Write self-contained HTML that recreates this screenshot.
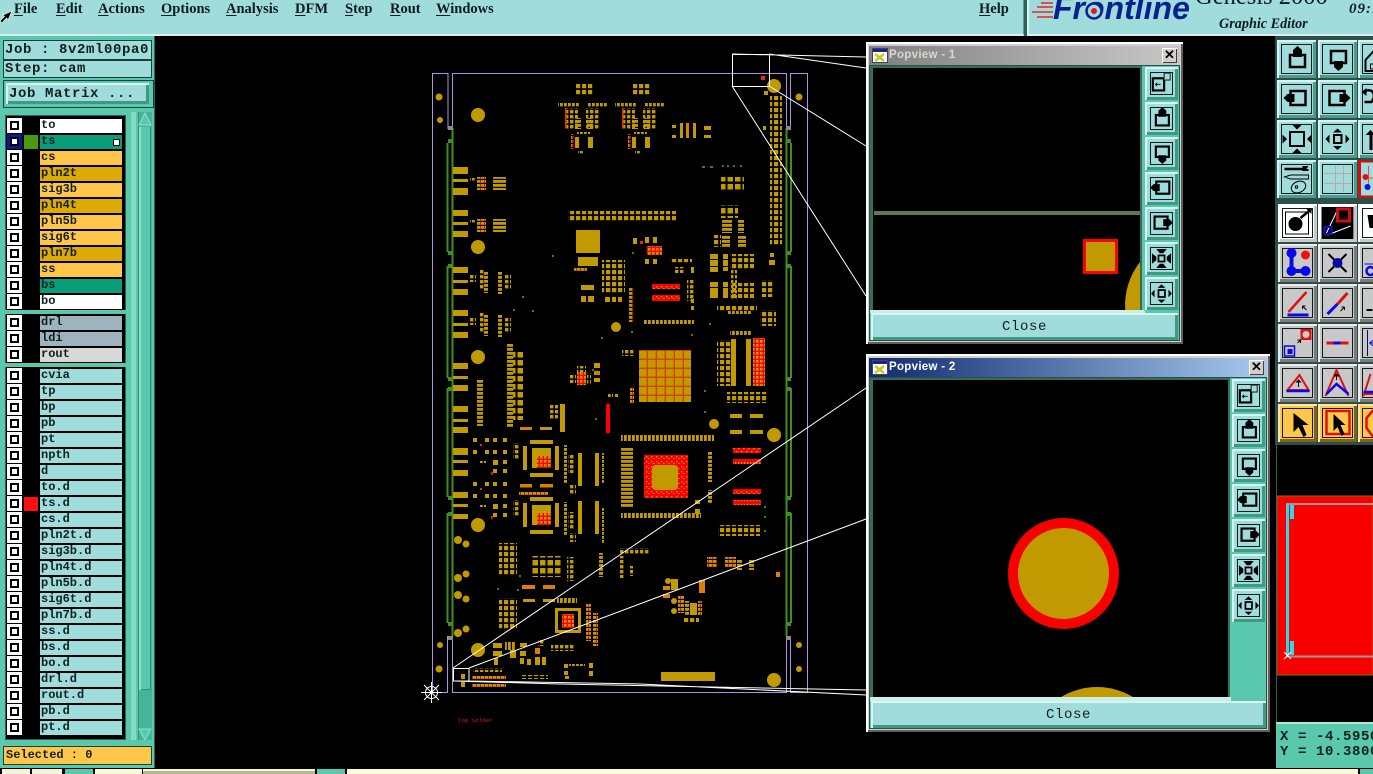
<!DOCTYPE html>
<html><head><meta charset="utf-8"><title>Genesis 2000 Graphic Editor</title>
<style>
html,body{margin:0;padding:0;width:1373px;height:774px;overflow:hidden;background:#000}
body{position:relative;font-family:"Liberation Mono",monospace;font-weight:bold;color:#10201c}
.a,.b,.r,.c,.s,.n,.w,.sb{position:absolute}
.a{display:block}
.m{position:absolute;top:0;font:bold 14.5px/18px "Liberation Serif",serif;color:#0c1c20}
.m u{text-underline-offset:2px}
.t14{font-size:14px;letter-spacing:.6px;line-height:17px;white-space:pre}
.b{width:39px;height:38px;overflow:hidden}
.b:before{content:"";position:absolute;left:4px;top:4px;right:4px;bottom:4px;border:1px solid #08201c}
.b svg{position:absolute;left:0;top:0;width:39px;height:38px}
.tl{background:#a0dcdc;box-shadow:inset 2px 2px 0 #d8f4f4,inset -3px -3px 0 #4f9a8e}
.wh{background:#fff;box-shadow:inset 2px 2px 0 #fff,inset -3px -3px 0 #c8c8c8}
.gr{background:#c8c8c8;box-shadow:inset 2px 2px 0 #ececec,inset -3px -3px 0 #7c7c7c}
.or{background:#ffc64a;box-shadow:inset 2px 2px 0 #ffe6a8,inset -3px -3px 0 #806020}
.sb{width:33px;height:33px;background:#a0dcdc;box-shadow:inset 2px 2px 0 #d8f4f4,inset -3px -3px 0 #3f9a84;outline:1px solid #5ac8ac}
.sb:before{content:"";position:absolute;left:5px;top:5px;right:5px;bottom:5px;border:1px solid #08201c}
.sb svg{position:absolute;left:0;top:0;width:33px;height:33px}
.c{left:7px;width:5px;height:5px;border:2px solid #000;outline:3px solid #fff;background:#fff;margin:2px 0 0 3px}
.n{left:40px;height:14px;font-size:12px;line-height:13px;padding-left:1px;box-sizing:border-box;width:82px;background:#9fdcdc;white-space:pre}
.clb{position:absolute;height:27px;background:#a0dcdc;box-shadow:inset 2px 2px 0 #d8f4f4,inset -3px -3px 0 #3f9a84;text-align:center;line-height:29px;font-size:14px;letter-spacing:.6px;font-weight:normal}
.tt{position:absolute;font:bold 11.5px/16px "Liberation Sans",sans-serif;letter-spacing:.3px}
.x{position:absolute;width:15px;height:15px;background:#d4d0c8;box-shadow:inset 1px 1px 0 #fff,inset -1px -1px 0 #404040;font:bold 13px/14px "Liberation Sans",sans-serif;text-align:center;color:#000}
</style></head><body>

<svg class="a" style="left:0;top:0" width="1373" height="774" viewBox="0 0 1373 774">
<defs>
<pattern id="p6" width="6" height="6" patternUnits="userSpaceOnUse"><rect width="4.200" height="4.200" fill="#c09a00"/></pattern>
<pattern id="p7" width="7.5" height="8" patternUnits="userSpaceOnUse"><rect width="5.500" height="5.500" fill="#c09a00"/></pattern>
<pattern id="p4" width="5" height="5" patternUnits="userSpaceOnUse"><rect width="3.400" height="3.400" fill="#c09a00"/></pattern>
<pattern id="h3" width="4" height="4" patternUnits="userSpaceOnUse"><rect width="4" height="2.800" fill="#c09a00"/></pattern>
<pattern id="v3" width="4" height="4" patternUnits="userSpaceOnUse"><rect width="2.800" height="4" fill="#c09a00"/></pattern>
<pattern id="hr" width="4" height="4" patternUnits="userSpaceOnUse"><rect width="4" height="2.800" fill="#c09a00"/><rect width="1" height="2.800" fill="#f00"/></pattern>
<pattern id="bg" width="9" height="9" patternUnits="userSpaceOnUse"><rect width="9" height="9" fill="#d84000"/><rect width="7.600" height="7.600" fill="#c09a00"/></pattern>
<pattern id="sg" width="4" height="4" patternUnits="userSpaceOnUse"><rect width="4" height="4" fill="#f00"/><rect width="2.600" height="2.600" fill="#c09a00"/></pattern>
<pattern id="rs" width="5" height="5" patternUnits="userSpaceOnUse"><rect width="5" height="5" fill="#f00"/><rect x="1" y="1" width="1.400" height="1.400" fill="#c09a00"/><rect x="3" y="3" width="1.600" height="1" fill="#c09a00"/></pattern>
<pattern id="rc" width="3" height="6" patternUnits="userSpaceOnUse"><rect width="3" height="6" fill="#f00"/><rect width="1.300" height="3" fill="#c09a00"/></pattern>

<g id="ab" fill="#c09a00">
<rect x="576" y="84" width="18" height="11" fill="url(#p6)"/>
<rect x="558" y="103" width="21" height="3.400" fill="url(#v3)"/>
<rect x="587" y="103" width="21" height="3.400" fill="url(#v3)"/>
<rect x="565" y="108" width="13" height="21" fill="url(#p4)"/>
<rect x="586" y="108" width="14" height="21" fill="url(#p4)"/>
<rect x="575" y="118" width="6" height="11" fill="url(#h3)"/>
<rect x="587" y="118" width="6" height="11" fill="url(#h3)"/>
<rect x="565" y="108" width="1.500" height="20" fill="#e03000"/>
<rect x="577" y="132" width="13" height="2" fill="url(#v3)"/>
<rect x="575" y="137" width="4" height="11"/><rect x="588" y="137" width="5" height="11"/>
<rect x="571" y="134" width="2.400" height="15" fill="url(#hr)"/>
<rect x="578" y="151" width="5" height="2.400" fill="url(#v3)"/>
</g>
<g id="d1" fill="#c09a00">
<rect x="470" y="178" width="5" height="2.500" fill="url(#v3)"/>
<rect x="477" y="177" width="9" height="13" fill="url(#hr)"/>
<rect x="493" y="177" width="13" height="13" fill="url(#h3)"/>
</g>
<g id="e1" fill="#c09a00">
<rect x="469" y="274" width="7" height="8" fill="url(#p4)"/>
<rect x="479" y="270" width="5" height="20" fill="url(#p4)"/>
<rect x="484" y="271" width="4" height="22" fill="url(#h3)"/>
<rect x="498" y="271" width="4" height="23" fill="url(#h3)"/>
<rect x="504" y="275" width="7" height="14" fill="url(#p4)"/>
</g>
<g id="ch" fill="#c09a00">
<rect x="523" y="446" width="4" height="24"/><rect x="555" y="446" width="4" height="24"/>
<rect x="530" y="440" width="23" height="4"/><rect x="530" y="473" width="23" height="4"/>
<rect x="532" y="448" width="19" height="20"/>
<rect x="537" y="456" width="14" height="12" fill="url(#sg)"/>
<rect x="513" y="443" width="6" height="17" fill="url(#p4)"/>
</g>
<g id="cl" fill="#c09a00">
<rect x="473" y="438" width="4" height="4"/><rect x="485" y="438" width="4" height="4"/><rect x="493" y="438" width="4" height="4"/><rect x="503" y="438" width="4" height="4"/>
<rect x="473" y="450" width="4" height="4"/><rect x="485" y="450" width="4" height="4"/><rect x="493" y="450" width="4" height="4"/><rect x="503" y="450" width="4" height="4"/>
<rect x="493" y="460" width="5" height="5"/><rect x="503" y="460" width="4" height="4"/><rect x="493" y="469" width="4" height="4"/><rect x="503" y="469" width="4" height="4"/>
<rect x="479" y="461" width="7" height="2" fill="url(#v3)"/>
<rect x="480" y="444" width="2" height="2" fill="#e03000"/><rect x="491" y="472" width="2" height="3" fill="#f00"/>
</g>
</defs>

<!-- board outline -->
<g fill="none" stroke="#b090e0" stroke-width="1">
<path d="M448 129V73.500H432.500V692.500H447.500V636"/>
<path d="M452.500 128V73.500H786.500V128M790.500 128V73.500H807.500V692.500H790.500V636M786.500 636V692.500H452.500V636"/>
</g>
<!-- green edges -->
<g fill="none" stroke="#3f9020" stroke-width="2">
<path d="M452.500 128V636M786.500 128V636"/>
<path d="M447.500 143V252M447.500 266V378M447.500 388V497M447.500 513V623M791 143V252M791 266V378M791 388V497M791 513V623"/>
</g>
<g fill="#3f9020">
<rect x="448" y="139" width="5" height="4"/><rect x="448" y="251" width="5" height="4"/><rect x="448" y="264" width="5" height="4"/><rect x="448" y="377" width="5" height="4"/><rect x="448" y="387" width="5" height="4"/><rect x="448" y="496" width="5" height="4"/><rect x="448" y="512" width="5" height="4"/><rect x="448" y="622" width="5" height="4"/>
<rect x="786" y="139" width="5" height="4"/><rect x="786" y="251" width="5" height="4"/><rect x="786" y="264" width="5" height="4"/><rect x="786" y="377" width="5" height="4"/><rect x="786" y="387" width="5" height="4"/><rect x="786" y="496" width="5" height="4"/><rect x="786" y="512" width="5" height="4"/><rect x="786" y="622" width="5" height="4"/>
</g>
<g fill="#8a8a8a"><rect x="448" y="126" width="5" height="4"/><rect x="786" y="126" width="5" height="4"/><rect x="448" y="636" width="5" height="4"/><rect x="786" y="636" width="5" height="4"/></g>

<!-- PCB copper -->
<g fill="#c09a00">
<circle cx="478" cy="115" r="7"/><circle cx="478" cy="247" r="7"/><circle cx="478" cy="357" r="7"/><circle cx="478" cy="525" r="7"/><circle cx="478" cy="650" r="7"/>
<circle cx="774" cy="86" r="7"/><circle cx="774" cy="435" r="7"/><circle cx="774" cy="680" r="7"/>
<circle cx="439" cy="97" r="3.500"/><circle cx="440" cy="120" r="3"/><circle cx="799" cy="97" r="3.500"/>
<circle cx="440" cy="645" r="3"/><circle cx="439" cy="669" r="3.500"/><circle cx="799" cy="645" r="3"/><circle cx="799" cy="669" r="3"/>
<circle cx="458" cy="540" r="4"/><circle cx="466" cy="544" r="3.500"/><circle cx="458" cy="578" r="4"/><circle cx="466" cy="574" r="3.500"/><circle cx="458" cy="595" r="4"/><circle cx="466" cy="599" r="3.500"/><circle cx="458" cy="633" r="4"/><circle cx="466" cy="629" r="3.500"/>
<circle cx="616" cy="327" r="5"/><circle cx="714" cy="424" r="5"/><circle cx="668" cy="581" r="3"/>
<circle cx="674" cy="601" r="3"/><circle cx="674" cy="611" r="3"/>
<rect x="453" y="167" width="15" height="7"/><rect x="453" y="179" width="15" height="3"/><rect x="453" y="188" width="15" height="7"/>
<rect x="453" y="210" width="15" height="6"/><rect x="453" y="222" width="15" height="3"/><rect x="453" y="231" width="15" height="6"/>
<rect x="453" y="267" width="15" height="6"/><rect x="453" y="280" width="15" height="3"/><rect x="453" y="289" width="15" height="6"/>
<rect x="453" y="310" width="15" height="6"/><rect x="453" y="323" width="15" height="3"/><rect x="453" y="332" width="15" height="6"/>
<rect x="453" y="363" width="15" height="6"/><rect x="453" y="376" width="15" height="3"/><rect x="453" y="385" width="15" height="6"/>
<rect x="453" y="406" width="15" height="6"/><rect x="453" y="419" width="15" height="3"/><rect x="453" y="427" width="15" height="6"/>
<rect x="453" y="448" width="15" height="7"/><rect x="453" y="460" width="15" height="3"/><rect x="453" y="470" width="15" height="6"/>
<rect x="453" y="492" width="15" height="6"/><rect x="453" y="504" width="15" height="3"/><rect x="453" y="514" width="15" height="5"/>
<rect x="770" y="96" width="12" height="150" fill="url(#p6)"/>
<rect x="763" y="126" width="3" height="4"/><rect x="770" y="253" width="4" height="4"/><rect x="769" y="260" width="6" height="5"/>
<rect x="761" y="76" width="4" height="4" fill="#e03000"/><rect x="764" y="91" width="4" height="4"/>
<rect x="672" y="125" width="4" height="3"/><rect x="672" y="135" width="4" height="3"/><rect x="704" y="126" width="7" height="4"/><rect x="704" y="135" width="7" height="3"/>
<rect x="680" y="123" width="3" height="15"/><rect x="686" y="123" width="3" height="15" fill="#d88000"/><rect x="693" y="123" width="3" height="15"/>
<rect x="568" y="211" width="108" height="11" fill="url(#p6)"/>
<rect x="576" y="230" width="24" height="23"/><rect x="578" y="257" width="20" height="9"/>
<rect x="574" y="268" width="13" height="3" fill="url(#hr)"/>
<rect x="645" y="237" width="4" height="6"/><rect x="653" y="237" width="4" height="6"/><rect x="645" y="259" width="4" height="5"/><rect x="653" y="259" width="4" height="5"/>
<rect x="647" y="246" width="15" height="9" fill="url(#sg)"/><rect x="633" y="238" width="4" height="6"/><rect x="640" y="241" width="3" height="3" fill="#e03000"/>
<rect x="602" y="260" width="23" height="33" fill="url(#p6)"/>
<rect x="605" y="287" width="17" height="5" fill="url(#p6)"/>
<rect x="581" y="285" width="13" height="5"/><rect x="581" y="296" width="5" height="6"/><rect x="588" y="296" width="6" height="6"/><rect x="605" y="297" width="5" height="5"/><rect x="612" y="297" width="4" height="5"/><rect x="618" y="297" width="4" height="5" fill="#d88000"/>
<rect x="629" y="288" width="4" height="34" fill="url(#hr)"/>
<rect x="652" y="284" width="28" height="5" fill="url(#rs)"/><rect x="652" y="295" width="28" height="6" fill="url(#rs)"/>
<rect x="643" y="320" width="51" height="4" fill="url(#v3)"/>
<rect x="670" y="259" width="22" height="4" fill="url(#p6)"/><rect x="674" y="267" width="11" height="6" fill="url(#p4)"/><rect x="691" y="267" width="3" height="6"/>
<rect x="687" y="279" width="7" height="22" fill="url(#p4)"/><rect x="691" y="299" width="3" height="4"/><rect x="691" y="306" width="3" height="4"/>
<rect x="721" y="177" width="23" height="13" fill="url(#p7)"/><rect x="721" y="205" width="17" height="13" fill="url(#p7)"/>
<rect x="722" y="220" width="10" height="13" fill="url(#h3)"/><rect x="738" y="220" width="6" height="13" fill="url(#h3)"/>
<rect x="713" y="235" width="8" height="12" fill="url(#p6)"/><rect x="722" y="236" width="8" height="12" fill="url(#h3)"/><rect x="738" y="236" width="8" height="12" fill="url(#h3)"/>
<rect x="710" y="254" width="8" height="5"/><rect x="710" y="260" width="8" height="6"/><rect x="710" y="267" width="8" height="5"/><rect x="723" y="254" width="5" height="5"/><rect x="723" y="260" width="5" height="6"/><rect x="723" y="267" width="5" height="4"/>
<rect x="710" y="282" width="8" height="5"/><rect x="710" y="288" width="8" height="5"/><rect x="710" y="293" width="8" height="5"/><rect x="723" y="282" width="5" height="5"/><rect x="723" y="288" width="5" height="5"/><rect x="723" y="293" width="5" height="5"/>
<rect x="730" y="254" width="24" height="15" fill="url(#p6)"/><rect x="730" y="283" width="24" height="15" fill="url(#p6)"/><rect x="731" y="269" width="6" height="30" fill="url(#p4)"/>
<rect x="762" y="280" width="11" height="17" fill="url(#p6)"/>
<rect x="717" y="306" width="40" height="5" fill="url(#p6)"/><rect x="728" y="311" width="24" height="3" fill="url(#v3)"/>
<rect x="760" y="310" width="16" height="16" fill="url(#p6)"/>
<rect x="730" y="331" width="22" height="4" fill="url(#v3)"/>
<rect x="731" y="339" width="5" height="29"/><rect x="746" y="339" width="5" height="29"/>
<rect x="731" y="365" width="5" height="21"/><rect x="746" y="365" width="5" height="21"/>
<rect x="717" y="340" width="14" height="46" fill="url(#p6)"/>
<rect x="753" y="338" width="12" height="48" fill="url(#sg)"/>
<rect x="727" y="392" width="40" height="11" fill="url(#p6)"/>
<rect x="570" y="375" width="6" height="8" fill="url(#p4)"/><rect x="594" y="363" width="6" height="5"/><rect x="594" y="371" width="6" height="4" fill="#d88000"/><rect x="594" y="378" width="6" height="4"/><rect x="577" y="366" width="9" height="6" fill="url(#p4)"/><rect x="577" y="372" width="9" height="13" fill="url(#sg)"/><rect x="587" y="373" width="4" height="12" fill="url(#p4)"/>
<rect x="622" y="350" width="13" height="6" fill="url(#p4)"/>
<rect x="639" y="350" width="52" height="52" fill="url(#bg)"/>
<rect x="507" y="343" width="6" height="84" fill="url(#h3)"/><rect x="513" y="352" width="10" height="68" fill="url(#p7)"/>
<rect x="477" y="380" width="6" height="46" fill="url(#h3)"/>
<rect x="520" y="427" width="12" height="3" fill="#d88000"/><rect x="540" y="427" width="12" height="3"/>
<rect x="549" y="405" width="9" height="15" fill="url(#p4)"/><rect x="560" y="404" width="5" height="28"/>
<rect x="606" y="404" width="4" height="29" fill="#f00"/><rect x="630" y="388" width="4" height="15" fill="url(#hr)"/><rect x="607" y="394" width="6" height="3" fill="url(#v3)"/><rect x="615" y="394" width="3" height="3"/>
<rect x="621" y="435" width="93" height="6" fill="url(#v3)"/>
<rect x="621" y="447" width="12" height="60" fill="url(#h3)"/>
<rect x="621" y="513" width="80" height="5" fill="url(#v3)"/>
<rect x="644" y="455" width="44" height="43" fill="url(#rs)"/>
<rect x="652" y="465" width="26" height="25" rx="4"/>
<rect x="708" y="452" width="4" height="30" fill="url(#h3)"/><rect x="708" y="490" width="4" height="13" fill="url(#h3)"/>
<rect x="695" y="500" width="5" height="4"/><rect x="695" y="509" width="5" height="5"/>
<rect x="730" y="414" width="12" height="4"/><rect x="750" y="414" width="13" height="4"/><rect x="730" y="430" width="12" height="4"/><rect x="750" y="430" width="13" height="4"/>
<rect x="733" y="448" width="28" height="5" fill="url(#rs)"/><rect x="733" y="459" width="28" height="5" fill="url(#rc)"/><rect x="733" y="489" width="28" height="5" fill="url(#rs)"/><rect x="733" y="500" width="28" height="5" fill="url(#rc)"/>
<rect x="718" y="525" width="42" height="11" fill="url(#p6)"/>
<use href="#ch"/><use href="#ch" y="57"/><use href="#cl"/><use href="#cl" y="44"/>
<rect x="520" y="484" width="12" height="3.500" fill="#d88000"/><rect x="540" y="484" width="13" height="3.500" fill="#d88000"/><rect x="519" y="492" width="29" height="3" fill="url(#hr)"/>
<rect x="564" y="445" width="3" height="38" fill="url(#h3)"/><rect x="564" y="502" width="3" height="33" fill="url(#h3)"/>
<rect x="568" y="455" width="6" height="18" fill="url(#p4)"/><rect x="570" y="484" width="6" height="11" fill="url(#p4)"/><rect x="568" y="512" width="6" height="18" fill="url(#p4)"/><rect x="570" y="533" width="6" height="9" fill="url(#p4)"/>
<rect x="578" y="453" width="4" height="33"/><rect x="595" y="453" width="4" height="33"/><rect x="578" y="501" width="4" height="33"/><rect x="595" y="501" width="4" height="33"/>
<rect x="602" y="453" width="2" height="30" fill="url(#h3)"/><rect x="602" y="508" width="2" height="35" fill="url(#h3)"/>
<rect x="531" y="556" width="31" height="21" fill="url(#p7)"/><rect x="567" y="557" width="7" height="24" fill="url(#p4)"/>
<rect x="499" y="543" width="18" height="32" fill="url(#p6)"/><rect x="499" y="598" width="18" height="31" fill="url(#p6)"/>
<rect x="522" y="585" width="13" height="4" fill="#d88000"/><rect x="543" y="585" width="12" height="4" fill="#d88000"/><rect x="523" y="599" width="12" height="3"/><rect x="543" y="599" width="12" height="3"/>
<rect x="557" y="598" width="20" height="5" fill="url(#v3)"/>
<rect x="555" y="608" width="26" height="25"/><rect x="558" y="611" width="20" height="19" fill="#000"/><rect x="562" y="614" width="12" height="14" fill="url(#sg)"/>
<rect x="586" y="603" width="5" height="38" fill="url(#hr)"/><rect x="593" y="613" width="5" height="33" fill="url(#hr)"/>
<rect x="620" y="548" width="30" height="7" fill="url(#p4)"/><rect x="620" y="556" width="4" height="22" fill="url(#p4)"/><rect x="629" y="566" width="4" height="10" fill="url(#p4)"/>
<rect x="599" y="553" width="4" height="24" fill="url(#h3)"/>
<rect x="707" y="557" width="10" height="10" fill="url(#hr)"/><rect x="725" y="557" width="11" height="10" fill="url(#hr)"/><rect x="737" y="559" width="5" height="11" fill="url(#h3)"/><rect x="749" y="560" width="5" height="10" fill="url(#h3)"/>
<rect x="776" y="572" width="4" height="5" fill="#d88000"/>
<rect x="671" y="579" width="7" height="11"/><rect x="699" y="580" width="6" height="13" fill="#d88000"/><rect x="663" y="586" width="7" height="4" fill="#d88000"/><rect x="663" y="594" width="7" height="4" fill="#d88000"/>
<rect x="678" y="595" width="6" height="18" fill="url(#hr)"/><rect x="690" y="603" width="7" height="12"/><rect x="685" y="601" width="4" height="15" fill="url(#h3)"/><rect x="698" y="601" width="4" height="15" fill="url(#hr)"/><rect x="683" y="618" width="16" height="4" fill="url(#p6)"/>
<rect x="473" y="668" width="29" height="4" fill="url(#p4)"/>
<rect x="472" y="676" width="34" height="4" fill="url(#hr)"/><rect x="472" y="684" width="34" height="4" fill="url(#hr)"/>
<rect x="493" y="643" width="9" height="5"/><rect x="493" y="651" width="9" height="5"/><rect x="494" y="658" width="4" height="7"/><rect x="505" y="642" width="10" height="8" fill="url(#v3)"/><rect x="510" y="650" width="6" height="8"/>
<rect x="520" y="643" width="7" height="4"/><rect x="520" y="651" width="6" height="5"/><rect x="520" y="658" width="4" height="6"/><rect x="527" y="659" width="4" height="6"/><rect x="535" y="657" width="5" height="8"/><rect x="542" y="657" width="4" height="8"/><rect x="535" y="648" width="5" height="6" fill="#d88000"/><rect x="538" y="640" width="6" height="6" fill="url(#p4)"/>
<rect x="551" y="645" width="23" height="6" fill="url(#p4)"/>
<rect x="520" y="675" width="28" height="4" fill="url(#p6)"/>
<rect x="564" y="664" width="4" height="4"/><rect x="564" y="671" width="4" height="4"/><rect x="565" y="676" width="4" height="3"/><rect x="589" y="663" width="4" height="5"/><rect x="589" y="671" width="4" height="5"/><rect x="569" y="664" width="16" height="2" fill="url(#v3)"/>
<rect x="661" y="672" width="54" height="9"/>
<rect x="461" y="674" width="4" height="5"/><rect x="461" y="682" width="4" height="5"/>
</g>
<use href="#ab"/><use href="#ab" x="57"/>
<use href="#d1"/><use href="#d1" y="42"/><use href="#e1"/><use href="#e1" y="43"/>
<g fill="#2f8a1a">
<rect x="702" y="166" width="3" height="2"/><rect x="710" y="166" width="3" height="2"/><rect x="722" y="165" width="2" height="2"/><rect x="727" y="165" width="2" height="2"/><rect x="733" y="165" width="2" height="2"/><rect x="740" y="165" width="2" height="2"/>
<rect x="552" y="255" width="2" height="2"/><rect x="632" y="252" width="2" height="2"/><rect x="522" y="296" width="2" height="2"/><rect x="532" y="310" width="2" height="2"/><rect x="513" y="309" width="2" height="2"/>
<rect x="601" y="337" width="2" height="2"/><rect x="631" y="331" width="2" height="2"/><rect x="691" y="334" width="2" height="2"/><rect x="709" y="323" width="2" height="2"/><rect x="592" y="369" width="2" height="2"/>
<rect x="595" y="418" width="2" height="2"/><rect x="704" y="390" width="2" height="2"/><rect x="704" y="411" width="2" height="2"/><rect x="764" y="506" width="2" height="2"/><rect x="764" y="516" width="2" height="2"/><rect x="764" y="530" width="2" height="2"/>
<rect x="497" y="588" width="2" height="2"/><rect x="517" y="589" width="2" height="2"/><rect x="519" y="575" width="2" height="2"/>
</g>
<g fill="none" stroke="#fff" stroke-width="1">
<path d="M732.500 54.500H769.500V86.500H732.500ZM732 54L866 57M769 54L866 68M769 86L866 146M732 86L866 296"/>
<path d="M453.500 668.500H469V681H453.500ZM453 668L866 388M469 668L866 519M469 681L640 684L866 695M453 681L560 684L866 690"/>
</g>
<g stroke="#fff" stroke-width="1" fill="none"><circle cx="431.500" cy="692.500" r="6"/><path d="M421 692.500H442M431.500 682V703M424 685L439 700M424 700L439 685"/></g>
<text x="458" y="722" fill="#e01818" font-family="Liberation Mono,monospace" font-size="5.800" font-weight="normal">Top Solder</text>
</svg>

<!-- top menu bar -->
<div class="a" style="left:0;top:0;width:1023px;height:34px;background:#a0dcdc;border-bottom:2px solid #d8f0f0;border-right:2px solid #5a9a94"></div>
<div class="a" style="left:1024px;top:0;width:3px;height:36px;background:#2f5f55"></div>
<div class="a" style="left:1027px;top:0;width:346px;height:34px;background:#a0dcdc;border-bottom:2px solid #d8f0f0;box-shadow:inset 2px 0 0 #d8f4f4"></div>
<div class="m" style="left:14px"><u>F</u>ile</div>
<div class="m" style="left:56px"><u>E</u>dit</div>
<div class="m" style="left:98px"><u>A</u>ctions</div>
<div class="m" style="left:161px"><u>O</u>ptions</div>
<div class="m" style="left:226px"><u>A</u>nalysis</div>
<div class="m" style="left:295px"><u>D</u>FM</div>
<div class="m" style="left:345px"><u>S</u>tep</div>
<div class="m" style="left:390px"><u>R</u>out</div>
<div class="m" style="left:436px"><u>W</u>indows</div>
<div class="m" style="left:979px"><u>H</u>elp</div>
<svg class="a" style="left:0;top:8px" width="14" height="18" viewBox="0 0 14 18"><path d="M12 3L3 7l1.500 1.500L0 13l2 2 4.500-5L8 12z" fill="#000" stroke="#fff" stroke-width=".6"/></svg>

<!-- logo -->
<svg class="a" style="left:1030px;top:0" width="24" height="22" viewBox="0 0 24 22"><g stroke="#ee2020" stroke-width="1.600"><path d="M11 3H23M7 7H23M2 12H23M7 17H23"/></g></svg>
<div class="a" style="left:1053px;top:-11px;font:italic bold 32px/38px 'Liberation Sans',sans-serif;color:#0a2090;white-space:nowrap;letter-spacing:0">Frontline</div>
<svg class="a" style="left:1085px;top:2px" width="18" height="18" viewBox="0 0 18 18"><circle cx="9" cy="9" r="7.500" fill="#a0dcdc" stroke="#0a2090" stroke-width="2.500"/><circle cx="9" cy="9" r="3" fill="#e01818"/></svg>
<div class="a" style="left:1195px;top:-17px;font:24.5px/28px 'Liberation Serif',serif;color:#0c1c20;white-space:nowrap">Genesis 2000</div>
<div class="a" style="left:1219px;top:15px;font:italic bold 14.2px/18px 'Liberation Serif',serif;color:#0c1c20;white-space:nowrap">Graphic Editor</div>
<div class="a" style="left:1349px;top:0;font:italic bold 15px/18px 'Liberation Serif',serif;color:#0c1c20;white-space:nowrap;letter-spacing:1px">09:15</div>

<!-- left panel -->
<div class="a" style="left:0;top:36px;width:155px;height:732px;background:#5ac8ac;border-right:1px solid #2f5f55;box-sizing:border-box"></div>
<div class="a t14" style="left:3px;top:40px;width:146px;height:18px;background:#a0dcdc;border:1px solid #16403a;padding-left:1px;line-height:19px">Job : 8v2ml00pa0</div>
<div class="a t14" style="left:3px;top:60px;width:146px;height:16px;background:#a0dcdc;border:1px solid #16403a;padding-left:1px;line-height:17px">Step: cam</div>
<div class="a" style="left:3px;top:80px;width:149px;height:26px;background:#5ac8ac;border:1px solid #16403a"></div>
<div class="a t14" style="left:6px;top:83px;width:143px;height:21px;background:#a0dcdc;box-shadow:inset 2px 2px 0 #d8f4f4,inset -3px -3px 0 #3f9a84;padding-left:3px;box-sizing:border-box;line-height:22px">Job Matrix ...</div>

<div class="a" style="left:5px;top:115px;width:121px;height:625px;background:#000;border:1px solid #2f5f55;box-sizing:border-box;overflow:hidden"></div>
<div class="a" style="left:5px;top:310px;width:121px;height:4px;background:#5ac8ac"></div>
<div class="a" style="left:5px;top:363px;width:121px;height:4px;background:#5ac8ac"></div>
<div class="a" style="left:127px;top:112px;width:9px;height:628px;background:#5ac8ac;box-shadow:inset -5px 0 0 #84dcc6"></div>
<div class="a" style="left:138px;top:112px;width:14px;height:628px;background:#46b496;box-shadow:inset 1px 0 0 #2f8f78"></div>
<div class="a" style="left:139px;top:127px;width:12px;height:563px;background:#5ac8ac;box-shadow:inset 2px 0 0 #8ee0cc,inset -1px -1px 0 #2f8f78"></div>
<svg class="a" style="left:138px;top:112px" width="14" height="15" viewBox="0 0 14 15"><path d="M7 1L13 13H1Z" fill="#5ac8ac" stroke="#8ee0cc"/></svg>
<svg class="a" style="left:138px;top:727px" width="14" height="14" viewBox="0 0 14 14"><path d="M1 2H13L7 13Z" fill="#5ac8ac" stroke="#8ee0cc"/></svg>

<div id="list">
<div class="c" style="top:119px"></div><div class="n" style="top:119px;background:#fff">to</div>
<div class="c" style="top:135px;outline-color:#0a1a90"></div><div class="s" style="left:24px;top:135px;width:14px;height:14px;background:#4a9a10"></div><div class="n" style="top:135px;background:#0a9d7a">ts<span style="position:absolute;right:2px;top:4px;width:5px;height:5px;border:1px solid #000;background:#fff"></span></div>
<div class="c" style="top:151px"></div><div class="n" style="top:151px;background:#ffc64a">cs</div>
<div class="c" style="top:167px"></div><div class="n" style="top:167px;background:#dcaa00">pln2t</div>
<div class="c" style="top:183px"></div><div class="n" style="top:183px;background:#ffc64a">sig3b</div>
<div class="c" style="top:199px"></div><div class="n" style="top:199px;background:#dcaa00">pln4t</div>
<div class="c" style="top:215px"></div><div class="n" style="top:215px;background:#ffc64a">pln5b</div>
<div class="c" style="top:231px"></div><div class="n" style="top:231px;background:#ffc64a">sig6t</div>
<div class="c" style="top:247px"></div><div class="n" style="top:247px;background:#dcaa00">pln7b</div>
<div class="c" style="top:263px"></div><div class="n" style="top:263px;background:#ffc64a">ss</div>
<div class="c" style="top:279px"></div><div class="n" style="top:279px;background:#0a9d7a">bs</div>
<div class="c" style="top:295px"></div><div class="n" style="top:295px;background:#fff">bo</div>
<div class="c" style="top:316px"></div><div class="n" style="top:316px;background:#9db3bd">drl</div>
<div class="c" style="top:332px"></div><div class="n" style="top:332px;background:#9db3bd">ldi</div>
<div class="c" style="top:348px"></div><div class="n" style="top:348px;background:#d8d8d8">rout</div>
<div class="c" style="top:369px"></div><div class="n" style="top:369px">cvia</div>
<div class="c" style="top:385px"></div><div class="n" style="top:385px">tp</div>
<div class="c" style="top:401px"></div><div class="n" style="top:401px">bp</div>
<div class="c" style="top:417px"></div><div class="n" style="top:417px">pb</div>
<div class="c" style="top:433px"></div><div class="n" style="top:433px">pt</div>
<div class="c" style="top:449px"></div><div class="n" style="top:449px">npth</div>
<div class="c" style="top:465px"></div><div class="n" style="top:465px">d</div>
<div class="c" style="top:481px"></div><div class="n" style="top:481px">to.d</div>
<div class="c" style="top:497px"></div><div class="s" style="left:24px;top:497px;width:14px;height:14px;background:#ff1010"></div><div class="n" style="top:497px">ts.d</div>
<div class="c" style="top:513px"></div><div class="n" style="top:513px">cs.d</div>
<div class="c" style="top:529px"></div><div class="n" style="top:529px">pln2t.d</div>
<div class="c" style="top:545px"></div><div class="n" style="top:545px">sig3b.d</div>
<div class="c" style="top:561px"></div><div class="n" style="top:561px">pln4t.d</div>
<div class="c" style="top:577px"></div><div class="n" style="top:577px">pln5b.d</div>
<div class="c" style="top:593px"></div><div class="n" style="top:593px">sig6t.d</div>
<div class="c" style="top:609px"></div><div class="n" style="top:609px">pln7b.d</div>
<div class="c" style="top:625px"></div><div class="n" style="top:625px">ss.d</div>
<div class="c" style="top:641px"></div><div class="n" style="top:641px">bs.d</div>
<div class="c" style="top:657px"></div><div class="n" style="top:657px">bo.d</div>
<div class="c" style="top:673px"></div><div class="n" style="top:673px">drl.d</div>
<div class="c" style="top:689px"></div><div class="n" style="top:689px">rout.d</div>
<div class="c" style="top:705px"></div><div class="n" style="top:705px">pb.d</div>
<div class="c" style="top:721px"></div><div class="n" style="top:721px">pt.d</div>
</div>
<div class="a" style="left:1px;top:740px;width:152px;height:27px;background:#5ac8ac"></div>
<div class="a" style="left:3px;top:746px;width:149px;height:19px;background:#ffc64a;border:1px solid #16403a;box-sizing:border-box;font-size:12px;line-height:17px;padding-left:2px;white-space:pre">Selected : 0</div>

<!-- bottom strip -->
<div class="a" style="left:0;top:768px;width:1373px;height:6px;background:#000"></div>
<div class="a" style="left:2px;top:769px;width:28px;height:5px;background:#f4f4d8"></div>
<div class="a" style="left:32px;top:769px;width:30px;height:5px;background:#f4f4d8"></div>
<div class="a" style="left:65px;top:769px;width:28px;height:5px;background:#5ac8ac"></div>
<div class="a" style="left:95px;top:769px;width:47px;height:5px;background:#fbfbd8"></div>
<div class="a" style="left:143px;top:769px;width:172px;height:5px;background:#b8b890;box-shadow:inset 0 2px 0 #f8f8d8"></div>
<div class="a" style="left:317px;top:769px;width:28px;height:5px;background:#5ac8ac"></div>
<div class="a" style="left:347px;top:769px;width:1011px;height:5px;background:#fbfbd8"></div>
<div class="a" style="left:1360px;top:769px;width:13px;height:5px;background:#5ac8ac"></div>

<!-- icon symbols -->
<svg width="0" height="0" style="position:absolute;left:0;top:0"><defs>
<symbol id="up" viewBox="0 0 38 38"><rect x="12.500" y="15" width="15" height="12" fill="none" stroke="#000" stroke-width="2.500"/><path d="M20 6l4.500 4v7h-9v-7z"/></symbol>
<symbol id="dn" viewBox="0 0 38 38"><rect x="12.500" y="11" width="15" height="12" fill="none" stroke="#000" stroke-width="2.500"/><path d="M20 31l4.500-4v-6h-9v6z"/></symbol>
<symbol id="lf" viewBox="0 0 38 38"><rect x="13" y="11" width="15" height="14" fill="none" stroke="#000" stroke-width="2.500"/><path d="M6 18l4-4h7v8h-7z"/></symbol>
<symbol id="rt" viewBox="0 0 38 38"><rect x="11" y="11" width="15" height="14" fill="none" stroke="#000" stroke-width="2.500"/><path d="M32 18l-4-4h-7v8h7z"/></symbol>
<symbol id="ex" viewBox="0 0 38 38"><rect x="12.500" y="12" width="14" height="14" fill="none" stroke="#000" stroke-width="2"/><path d="M15 5h9l-4.500 4.500zM15 33h9l-4.500-4.500zM5 14.500v9l4.500-4.500zM34 14.500v9l-4.500-4.500z"/></symbol>
<symbol id="fi" viewBox="0 0 38 38"><rect x="15.500" y="15" width="7.500" height="8" fill="none" stroke="#000" stroke-width="2"/><path d="M19 8.500l-4.500 4h9zM19 30l-4.500-4h9zM7 19l4-4.500v9zM31 19l-4-4.500v9z"/></symbol>
<symbol id="ec" viewBox="0 0 38 38"><rect x="15.500" y="15.500" width="7" height="7" fill="none" stroke="#000" stroke-width="2"/><path d="M13 8h12l-4 5h-4zM13 30h12l-4-5h-4zM8 13v12l5-4v-4zM30 13v12l-5-4v-4z"/></symbol>
<symbol id="po" viewBox="0 0 38 38"><rect x="9" y="13" width="13" height="14" fill="none" stroke="#000" stroke-width="2.500"/><rect x="22" y="7" width="7" height="8" fill="#a0dcdc" stroke="#000"/><path d="M18 20H12M14 18l-2 2 2 2" stroke="#000" fill="none"/></symbol>
<symbol id="tl" viewBox="0 0 38 38"><path d="M7 9H26" stroke="#000" stroke-width="2.500"/><path d="M25 6h6l-2 3h2v2h-6z"/><path d="M7 17L13 15H31V19H13z" fill="#a0dcdc" stroke="#000"/><ellipse cx="21" cy="27" rx="7.500" ry="5.500" fill="none" stroke="#000" transform="rotate(-25 21 27)"/><circle cx="19" cy="27" r="1.200" fill="none" stroke="#000"/></symbol>
<symbol id="gd" viewBox="0 0 38 38"><path d="M6 13.500H33M6 23.500H33M17 6V32M25 6V32" stroke="#c0a4a4" fill="none"/></symbol>
<symbol id="cr" viewBox="0 0 38 38"><rect x="1" y="1" width="36" height="36" fill="#a0dcdc" stroke="#d01010" stroke-width="3"/><path d="M6 18H34M10 6V30" stroke="#e05050"/><circle cx="7" cy="17" r="3" fill="#e01010"/><circle cx="9" cy="27" r="3" fill="#1010e0"/></symbol>
<symbol id="bc" viewBox="0 0 38 38"><rect x="7" y="8" width="23" height="22" fill="none" stroke="#000"/><circle cx="17" cy="20" r="7"/><path d="M22 14L33 5" stroke="#000" stroke-width="2.500"/><path d="M27 4h6v6z"/></symbol>
<symbol id="rb" viewBox="0 0 38 38"><rect x="3" y="3" width="32" height="32"/><path d="M7 31L19 6H29M9 31L32 22" stroke="#fff" fill="none"/><rect x="19" y="5" width="12" height="12" fill="none" stroke="#d01010" stroke-width="3"/><rect x="6" y="23" width="7" height="7" fill="none" stroke="#1010d0" stroke-width="2"/></symbol>
<symbol id="cb" viewBox="0 0 38 38"><path d="M7 7h14v-3l2 3V20h-14z" transform="translate(2 4)"/></symbol>
<symbol id="bl" viewBox="0 0 38 38"><path d="M13 9V27H26" stroke="#0808e8" stroke-width="4" fill="none"/><circle cx="13" cy="9" r="5" fill="#0808e8"/><circle cx="13" cy="27" r="5" fill="#0808e8"/><circle cx="27" cy="27" r="5" fill="#0808e8"/><circle cx="27" cy="11" r="4.500" fill="#f01010"/></symbol>
<symbol id="xb" viewBox="0 0 38 38"><path d="M10 10L28 28M28 10L10 28" stroke="#000" stroke-width="2"/><circle cx="19" cy="19" r="5" fill="#0808a0"/></symbol>
<symbol id="bo" viewBox="0 0 38 38"><circle cx="12" cy="27" r="4" fill="none" stroke="#0808e8" stroke-width="2.500"/><path d="M6 20H38" stroke="#0808e8"/></symbol>
<symbol id="rl" viewBox="0 0 38 38"><path d="M10 28L28 8" stroke="#e01010" stroke-width="2.500"/><path d="M9 31H30" stroke="#0808e8" stroke-width="3"/><path d="M24 22l4 4M24 22h3M24 22v3" stroke="#000"/></symbol>
<symbol id="rd" viewBox="0 0 38 38"><path d="M9 30L19 20" stroke="#0808e8" stroke-width="3"/><path d="M19 20L29 9" stroke="#e01010" stroke-width="3"/><path d="M22 27l4-4M26 23h-3M26 23v3" stroke="#000"/></symbol>
<symbol id="ht" viewBox="0 0 38 38"><path d="M30 26V18" stroke="#000"/><rect x="8" y="25" width="6" height="2" fill="#000"/></symbol>
<symbol id="sq" viewBox="0 0 38 38"><rect x="22" y="5" width="11" height="11" fill="#e01010"/><circle cx="27.500" cy="10.500" r="3.500" fill="#c8c8c8"/><rect x="6" y="22" width="10" height="10" fill="none" stroke="#0808e8" stroke-width="1.500"/><rect x="9" y="25" width="5" height="5" fill="#0808e8"/><path d="M19 19l3-3M22 16h-3M22 16v3" stroke="#000"/></symbol>
<symbol id="hb" viewBox="0 0 38 38"><path d="M8 19H15" stroke="#e01010" stroke-width="3"/><path d="M15 19H22" stroke="#0808e8" stroke-width="3"/><path d="M22 19H30" stroke="#e01010" stroke-width="3"/></symbol>
<symbol id="va" viewBox="0 0 38 38"><path d="M9 6V32" stroke="#0a0a60"/><path d="M11 19H30M11 19l4-3M11 19l4 3" stroke="#0808e8" fill="none"/></symbol>
<symbol id="tr" viewBox="0 0 38 38"><path d="M9 26L21 11L30 26z" fill="none" stroke="#e01010" stroke-width="2"/><path d="M8 27H31" stroke="#0808e8" stroke-width="2.500"/><path d="M20 23V17M20 16l-2 2h4z" stroke="#000" fill="#000"/></symbol>
<symbol id="cv" viewBox="0 0 38 38"><path d="M7 32L18 6L30 32" fill="none" stroke="#e01010" stroke-width="2"/><path d="M8 30L18 20L30 30" fill="none" stroke="#0808e8" stroke-width="2.500"/><path d="M18 16V11M18 10l-2 2h4z" stroke="#000" fill="#000"/></symbol>
<symbol id="ca" viewBox="0 0 38 38"><path d="M5 32L12 10M5 30H30" fill="none" stroke="#e01010" stroke-width="2"/><path d="M5 28H30" stroke="#0808e8" stroke-width="2.500"/></symbol>
<symbol id="pt" viewBox="0 0 38 38"><path d="M15 9V28L20 23L25 33L28 31L24 21L30 21z"/></symbol>
<symbol id="ps" viewBox="0 0 38 38"><rect x="8" y="7" width="23" height="23" fill="none" stroke="#e01010" stroke-width="2.500"/><path d="M15 10V27L19 23L23 32L26 30L22 21L27 21z"/></symbol>
<symbol id="oc" viewBox="0 0 38 38"><path d="M14 7H30L38 14V24L30 32H14L8 24V14z" fill="none" stroke="#e01010" stroke-width="2.500"/></symbol>
<symbol id="hm" viewBox="0 0 38 38"><path d="M7 20L18 8L20 10V31H7z" fill="none" stroke="#000" stroke-width="2"/><path d="M12 24h6v5h-6z" fill="none" stroke="#000"/></symbol>
<symbol id="cu" viewBox="0 0 38 38"><path d="M7 11c8-3 11 5 6 11H6" fill="none" stroke="#000" stroke-width="2.500"/><path d="M3 12l5-4v8z"/></symbol>
<symbol id="ua" viewBox="0 0 38 38"><path d="M12 10l-5 5h4v15h3V15h3z"/></symbol>
</defs></svg>

<!-- right toolbar -->
<div class="a" style="left:1275px;top:36px;width:98px;height:409px;background:#2a5048"></div>
<div class="a" style="left:1276px;top:445px;width:2px;height:280px;background:#2f5f55"></div>

<div class="b tl" style="left:1277px;top:40px"><svg><use href="#up"/></svg></div>
<div class="b tl" style="left:1318px;top:40px"><svg><use href="#dn"/></svg></div>
<div class="b tl" style="left:1358px;top:40px"><svg><use href="#hm"/></svg></div>
<div class="b tl" style="left:1277px;top:80px"><svg><use href="#lf"/></svg></div>
<div class="b tl" style="left:1318px;top:80px"><svg><use href="#rt"/></svg></div>
<div class="b tl" style="left:1358px;top:80px"><svg><use href="#cu"/></svg></div>
<div class="b tl" style="left:1277px;top:120px"><svg><use href="#ex"/></svg></div>
<div class="b tl" style="left:1318px;top:120px"><svg><use href="#fi"/></svg></div>
<div class="b tl" style="left:1358px;top:120px"><svg><use href="#ua"/></svg></div>
<div class="b tl" style="left:1277px;top:160px"><svg><use href="#tl"/></svg></div>
<div class="b tl" style="left:1318px;top:160px"><svg><use href="#gd"/></svg></div>
<div class="b tl" style="left:1358px;top:160px"><svg><use href="#cr"/></svg></div>

<div class="a" style="left:1276px;top:200px;width:97px;height:4px;background:#2a5048"></div>
<div class="b wh" style="left:1278px;top:204px"><svg><use href="#bc"/></svg></div>
<div class="b wh" style="left:1318px;top:204px"><svg><use href="#rb"/></svg></div>
<div class="b wh" style="left:1358px;top:204px"><svg><use href="#cb"/></svg></div>
<div class="b gr" style="left:1278px;top:244px"><svg><use href="#bl"/></svg></div>
<div class="b gr" style="left:1318px;top:244px"><svg><use href="#xb"/></svg></div>
<div class="b gr" style="left:1358px;top:244px"><svg><use href="#bo"/></svg></div>
<div class="b gr" style="left:1278px;top:284px"><svg><use href="#rl"/></svg></div>
<div class="b gr" style="left:1318px;top:284px"><svg><use href="#rd"/></svg></div>
<div class="b gr" style="left:1358px;top:284px"><svg><use href="#ht"/></svg></div>
<div class="b gr" style="left:1278px;top:324px"><svg><use href="#sq"/></svg></div>
<div class="b gr" style="left:1318px;top:324px"><svg><use href="#hb"/></svg></div>
<div class="b gr" style="left:1358px;top:324px"><svg><use href="#va"/></svg></div>
<div class="b gr" style="left:1278px;top:364px"><svg><use href="#tr"/></svg></div>
<div class="b gr" style="left:1318px;top:364px"><svg><use href="#cv"/></svg></div>
<div class="b gr" style="left:1358px;top:364px"><svg><use href="#ca"/></svg></div>
<div class="b or" style="left:1278px;top:404px"><svg><use href="#pt"/></svg></div>
<div class="b or" style="left:1318px;top:404px"><svg><use href="#ps"/></svg></div>
<div class="b or" style="left:1358px;top:404px"><svg><use href="#oc"/></svg></div>

<!-- overview panel -->
<svg class="a" style="left:1277px;top:445px" width="96" height="280" viewBox="0 0 96 280">
<rect width="96" height="280" fill="#000"/>
<rect x="0" y="51" width="96" height="179" fill="#f80000" stroke="#8a6a10"/>
<path d="M9 59H96M9 211.500H96" stroke="#9a9a9a" stroke-width="2"/>
<path d="M10.500 59V210" stroke="#30d8e8" stroke-width="3"/>
<rect x="13" y="60" width="4" height="14" fill="#30d8e8"/><rect x="13" y="196" width="4" height="14" fill="#30d8e8"/>
<path d="M7 207L14 214M14 207L7 214" stroke="#fff"/>
</svg>
<div class="a" style="left:1276px;top:722px;width:97px;height:46px;background:#5ac8ac;border-top:2px solid #b0e8d8;box-sizing:border-box;font-size:14px;letter-spacing:.6px;line-height:15px;padding:6px 0 0 4px;white-space:pre;overflow:hidden">X = -4.5950
Y = 10.3800</div>

<!-- Popview 1 -->
<div class="w" style="left:866px;top:42px;width:317px;height:302px;background:#d4d0c8;box-shadow:inset 2px 2px 0 #fff,inset -2px -2px 0 #606060"></div>
<div class="a" style="left:869px;top:46px;width:311px;height:19px;background:linear-gradient(90deg,#808080,#c8c8c8)"></div>
<svg class="a" style="left:872px;top:48px" width="16" height="15" viewBox="0 0 16 15"><rect x=".5" y=".5" width="15" height="14" fill="#fff" stroke="#404060"/><rect x="1" y="1" width="14" height="3" fill="#202080"/><path d="M3 6L12 13M12 6L3 13" stroke="#c8c820" stroke-width="2.500"/></svg>
<div class="tt" style="left:889px;top:47px;color:#d8d8d0">Popview - 1</div>
<div class="x" style="left:1162px;top:48px">✕</div>
<div class="a" style="left:869px;top:65px;width:311px;height:276px;background:#5ac8ac;border:1px solid #2a5048;box-sizing:border-box"></div>
<div class="a" style="left:870px;top:66px;width:272px;height:246px;background:#3a6a5c"></div>
<svg class="a" style="left:873px;top:68px" width="267" height="242" viewBox="0 0 267 242">
<rect width="267" height="242" fill="#000"/>
<rect x="1" y="143" width="266" height="4" fill="#5a7a50"/>
<rect x="211.500" y="172.500" width="32" height="32" fill="#c09a00" stroke="#f00" stroke-width="3"/>
<path d="M267 194A70 70 0 0 0 252.200 242H267Z" fill="#c09a00"/>
</svg>
<div class="a" style="left:870px;top:310px;width:275px;height:3px;background:#c8f0e4"></div>
<div class="sb" style="left:1145px;top:67px"><svg><use href="#po"/></svg></div>
<div class="sb" style="left:1145px;top:102px"><svg><use href="#up"/></svg></div>
<div class="sb" style="left:1145px;top:137px"><svg><use href="#dn"/></svg></div>
<div class="sb" style="left:1145px;top:172px"><svg><use href="#lf"/></svg></div>
<div class="sb" style="left:1145px;top:207px"><svg><use href="#rt"/></svg></div>
<div class="sb" style="left:1145px;top:242px"><svg><use href="#ec"/></svg></div>
<div class="sb" style="left:1145px;top:277px"><svg><use href="#fi"/></svg></div>
<div class="clb" style="left:871px;top:313px;width:307px">Close</div>

<!-- Popview 2 -->
<div class="w" style="left:866px;top:354px;width:404px;height:378px;background:#d4d0c8;box-shadow:inset 2px 2px 0 #fff,inset -2px -2px 0 #606060"></div>
<div class="a" style="left:869px;top:358px;width:398px;height:19px;background:linear-gradient(90deg,#102a70,#a6caee)"></div>
<svg class="a" style="left:872px;top:360px" width="16" height="15" viewBox="0 0 16 15"><rect x=".5" y=".5" width="15" height="14" fill="#fff" stroke="#404060"/><rect x="1" y="1" width="14" height="3" fill="#202080"/><path d="M3 6L12 13M12 6L3 13" stroke="#c8c820" stroke-width="2.500"/></svg>
<div class="tt" style="left:889px;top:359px;color:#fff">Popview - 2</div>
<div class="x" style="left:1249px;top:360px">✕</div>
<div class="a" style="left:869px;top:377px;width:398px;height:352px;background:#5ac8ac;border:1px solid #2a5048;box-sizing:border-box"></div>
<div class="a" style="left:870px;top:378px;width:360px;height:322px;background:#3a6a5c"></div>
<svg class="a" style="left:873px;top:380px" width="355" height="317" viewBox="0 0 355 317">
<rect width="355" height="317" fill="#000"/>
<circle cx="190.500" cy="193.500" r="50.500" fill="#c09a00" stroke="#f80000" stroke-width="10"/>
<path d="M188 317A70 70 0 0 1 260 317Z" fill="#c09a00"/>
</svg>
<div class="a" style="left:870px;top:697px;width:361px;height:4px;background:#c8f0e4"></div>
<div class="sb" style="left:1232px;top:379px"><svg><use href="#po"/></svg></div>
<div class="sb" style="left:1232px;top:414px"><svg><use href="#up"/></svg></div>
<div class="sb" style="left:1232px;top:449px"><svg><use href="#dn"/></svg></div>
<div class="sb" style="left:1232px;top:484px"><svg><use href="#lf"/></svg></div>
<div class="sb" style="left:1232px;top:519px"><svg><use href="#rt"/></svg></div>
<div class="sb" style="left:1232px;top:554px"><svg><use href="#ec"/></svg></div>
<div class="sb" style="left:1232px;top:589px"><svg><use href="#fi"/></svg></div>
<div class="clb" style="left:871px;top:701px;width:395px">Close</div>

</body></html>
